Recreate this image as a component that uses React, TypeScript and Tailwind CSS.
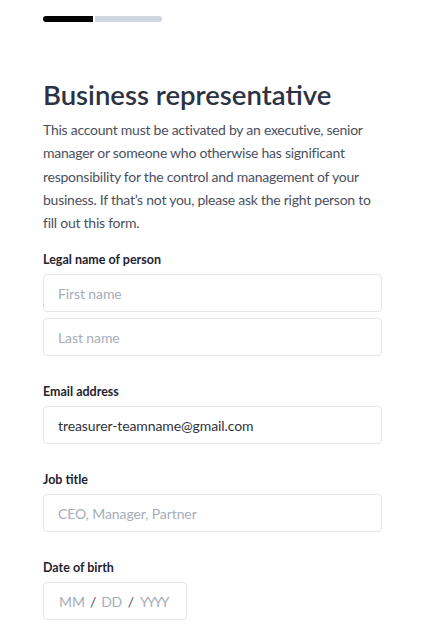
import React from 'react';

function Field({ placeholder, value, className = '' }: { placeholder?: string; value?: string; className?: string }) {
  return (
    <div
      className={`h-[38px] rounded-[4px] border border-[#e4e6ea] bg-white flex items-center px-[14px] text-[14px] tracking-[-0.1px] ${
        value ? 'text-[#30333d]' : 'text-[#a7adb8]'
      } ${className}`}
    >
      {value ?? placeholder}
    </div>
  );
}

function Label({ children }: { children: React.ReactNode }) {
  return <div className="text-[12.5px] font-bold text-[#1f2330] mb-[5px] leading-[18px]">{children}</div>;
}

export default function App() {
  return (
    <div
      className="min-h-screen bg-white pl-[43px] pt-[16px]"
      style={{ fontFamily: 'Lato, "Noto Sans", sans-serif' }}
    >
      {/* Progress */}
      <div className="flex gap-[2px]">
        <div className="w-[50px] h-[6px] rounded-l-full bg-black" />
        <div className="w-[67px] h-[6px] rounded-r-full bg-[#cfd6df]" />
      </div>

      <div className="w-[339px]">
        <h1 className="mt-[55px] text-[27.5px] font-semibold leading-[36px] text-[#2d3243]">
          Business representative
        </h1>
        <p className="mt-[5px] text-[14px] tracking-[-0.25px] leading-[23.3px] text-[#4b5060] w-[342px]">
          This account must be activated by an executive, senior manager or someone who otherwise has significant
          responsibility for the control and management of your business. If that’s not you, please ask the right
          person to fill out this form.
        </p>

        <div className="mt-[17px]">
          <Label>Legal name of person</Label>
          <div className="flex flex-col gap-[6px]">
            <Field placeholder="First name" />
            <Field placeholder="Last name" />
          </div>
        </div>

        <div className="mt-[27px]">
          <Label>Email address</Label>
          <Field value="treasurer-teamname@gmail.com" />
        </div>

        <div className="mt-[27px]">
          <Label>Job title</Label>
          <Field placeholder="CEO, Manager, Partner" />
        </div>

        <div className="mt-[27px]">
          <Label>Date of birth</Label>
          <div className="w-[144px] h-[38px] rounded-[4px] border border-[#e4e6ea] flex items-center px-[15px] text-[14px] text-[#a7adb8]">
            <span>MM</span>
            <span className="mx-[5px] text-[#4b5060]">/</span>
            <span className="tracking-[-0.5px]">DD</span>
            <span className="mx-[6px] text-[#4b5060]">/</span>
            <span className="tracking-[-1.8px]">YYYY</span>
          </div>
        </div>
      </div>
    </div>
  );
}
